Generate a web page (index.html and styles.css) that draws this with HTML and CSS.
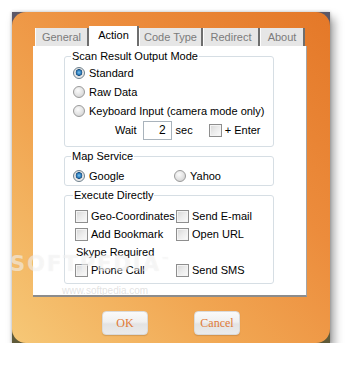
FILE: index.html
```html
<!DOCTYPE html>
<html>
<head>
<meta charset="utf-8">
<link rel="stylesheet" href="styles.css">
</head>
<body>
<div class="window">
  <div class="frame">
    <div class="tabs">
      <div class="tab t-general">General</div>
      <div class="tab active t-action">Action</div>
      <div class="tab t-code">Code Type</div>
      <div class="tab t-redirect">Redirect</div>
      <div class="tab t-about">About</div>
    </div>
    <div class="panel">
      <fieldset class="group g-scan">
        <legend>Scan Result Output Mode</legend>
        <div class="row"><span class="radio on"></span><span>Standard</span></div>
        <div class="row"><span class="radio"></span><span>Raw Data</span></div>
        <div class="row"><span class="radio"></span><span>Keyboard Input (camera mode only)</span></div>
        <div class="row wait">
          <span class="wait-label">Wait</span>
          <span class="num">2</span>
          <span class="sec">sec</span>
          <span class="check"></span>
          <span>+ Enter</span>
        </div>
      </fieldset>
      <fieldset class="group g-map">
        <legend>Map Service</legend>
        <div class="maprow">
          <div class="row"><span class="radio on"></span><span>Google</span></div>
          <div class="row"><span class="radio"></span><span>Yahoo</span></div>
        </div>
      </fieldset>
      <fieldset class="group g-exec">
        <legend>Execute Directly</legend>
        <div class="grid">
          <div class="row"><span class="check"></span><span>Geo-Coordinates</span></div>
          <div class="row"><span class="check"></span><span>Send E-mail</span></div>
          <div class="row"><span class="check"></span><span>Add Bookmark</span></div>
          <div class="row"><span class="check"></span><span>Open URL</span></div>
          <div class="row skype">Skype Required</div>
          <div class="row"></div>
          <div class="row"><span class="check"></span><span>Phone Call</span></div>
          <div class="row"><span class="check"></span><span>Send SMS</span></div>
        </div>
      </fieldset>
    </div>
    <div class="buttons">
      <div class="btn">OK</div>
      <div class="btn">Cancel</div>
    </div>
  </div>
  <div class="wm-big">SOFTPEDIA<sup>™</sup></div>
  <div class="wm-url">www.softpedia.com</div>
</div>
</body>
</html>
```

FILE: styles.css
```css
html, body {
  margin: 0;
  padding: 0;
  background: #ffffff;
}
body {
  font-family: "Liberation Sans", Arial, sans-serif;
  font-size: 11px;
  color: #000;
}
.window {
  position: relative;
  margin: 12px 0 0 12px;
  width: 318px;
  height: 331px;
  background: linear-gradient(to bottom, #5c5866 0%, #4f4870 30%, #4d5a63 70%, #5f5a38 100%);
  box-shadow: 4px 6px 9px rgba(0,0,0,0.38), 0 0 3px rgba(0,0,0,0.25);
}
.frame {
  box-sizing: border-box;
  height: 100%;
  border-radius: 14px;
  background: linear-gradient(to bottom left, #e47828 0%, #ec8c3c 35%, #f1a652 65%, #f6c877 100%);
  padding: 14px 0 0 21px;
}
.tabs {
  display: flex;
  height: 20px;
  padding-left: 2px;
  width: 272px;
}
.tab {
  box-sizing: border-box;
  height: 18px;
  margin-top: 2px;
  background: #e6e6e6;
  color: #7b7b7b;
  border-right: 2px solid #6e6e6e;
  border-left: 1px solid #fdfdfd;
  display: flex;
  align-items: center;
  justify-content: center;
  line-height: 13px;
  font-size: 11px;
}
.tab.active {
  height: 20px;
  margin-top: 0;
  background: #fff;
  color: #000;
  padding-bottom: 1px;
}
.t-general { width: 54px; }
.t-action { width: 50px; }
.t-code { width: 64px; }
.t-redirect { width: 57px; }
.t-about { width: 45px; }
.panel {
  box-sizing: border-box;
  width: 274px;
  height: 251px;
  background: #fff;
  border-right: 1px solid #a5a5a5;
  border-bottom: 2px solid #8c8c8c;
  padding: 4px 0 0 31px;
}
.group {
  margin: 0;
  width: 210px;
  box-sizing: border-box;
  border: 1px solid #d6dee4;
  border-radius: 3px;
  padding: 0 0 0 8px;
}
.group + .group {
  margin-top: 3px;
}
legend {
  padding: 0 1px;
  margin-left: -2px;
  line-height: 13px;
  font-size: 11px;
}
.row {
  display: flex;
  align-items: center;
  height: 19px;
  white-space: nowrap;
}
.radio {
  box-sizing: border-box;
  width: 12px;
  height: 12px;
  border-radius: 50%;
  border: 1px solid #9a9a9a;
  background: radial-gradient(circle at 40% 35%, #fbfbfb 0%, #e2e2e2 55%, #c8c8c8 100%);
  margin-right: 4px;
  flex: none;
}
.radio.on {
  border-color: #6d7f8c;
  background: radial-gradient(circle at 50% 45%, #7cc4ee 0%, #2f7fbf 28%, #1b4f7f 42%, #dcdcdc 48%, #f2f2f2 75%, #cfcfcf 100%);
}
.check {
  box-sizing: border-box;
  width: 13px;
  height: 13px;
  border: 1px solid #8e8e8e;
  background: linear-gradient(135deg, #d6d6d6 0%, #ececec 50%, #fbfbfb 100%);
  box-shadow: inset 0 0 0 1px #f4f4f4;
  margin-right: 3px;
  flex: none;
}
.g-scan {
  padding-bottom: 6px;
}
.wait {
  padding-left: 42px;
  height: 20px;
}
.wait-label {
  margin-right: 6px;
}
.num {
  box-sizing: border-box;
  width: 29px;
  height: 19px;
  border: 1px solid #a9b3bc;
  text-align: right;
  padding-right: 5px;
  line-height: 17px;
  margin-right: 4px;
  font-size: 12px;
}
.sec {
  margin-right: 16px;
}
.g-map {
  padding-top: 4px;
  padding-bottom: 1px;
}
.maprow {
  display: flex;
}
.maprow .row {
  height: 17px;
}
.maprow .row:first-child {
  width: 101px;
}
.g-exec {
  padding: 5px 0 4px 10px;
}
.grid {
  display: grid;
  grid-template-columns: 101px auto;
}
.grid .row {
  height: 18px;
}
.skype {
  padding-left: 1px;
}
.buttons {
  display: flex;
  gap: 46px;
  padding: 14px 0 0 69px;
}
.btn {
  box-sizing: border-box;
  width: 46px;
  height: 24px;
  border: 1px solid #dadada;
  border-radius: 4px;
  background: linear-gradient(to bottom, #fafafa 0%, #f0f0f0 45%, #e3e3e3 55%, #ebebeb 100%);
  box-shadow: 0 1px 1px rgba(120,80,40,0.25);
  color: #e07a36;
  font-family: "Liberation Serif", "Times New Roman", serif;
  font-size: 12px;
  display: flex;
  align-items: center;
  justify-content: center;
}
.wm-big {
  position: absolute;
  left: -2px;
  top: 240px;
  font-family: "DejaVu Sans", sans-serif;
  font-weight: bold;
  font-size: 21px;
  letter-spacing: 2px;
  color: rgba(255,255,255,0.5);
  text-shadow: 0 0 1px rgba(160,160,160,0.2);
  pointer-events: none;
}
.wm-big sup {
  font-size: 8px;
}
.wm-url {
  position: absolute;
  left: 50px;
  top: 273px;
  font-size: 10px;
  color: rgba(190,190,190,0.45);
  pointer-events: none;
}
```
